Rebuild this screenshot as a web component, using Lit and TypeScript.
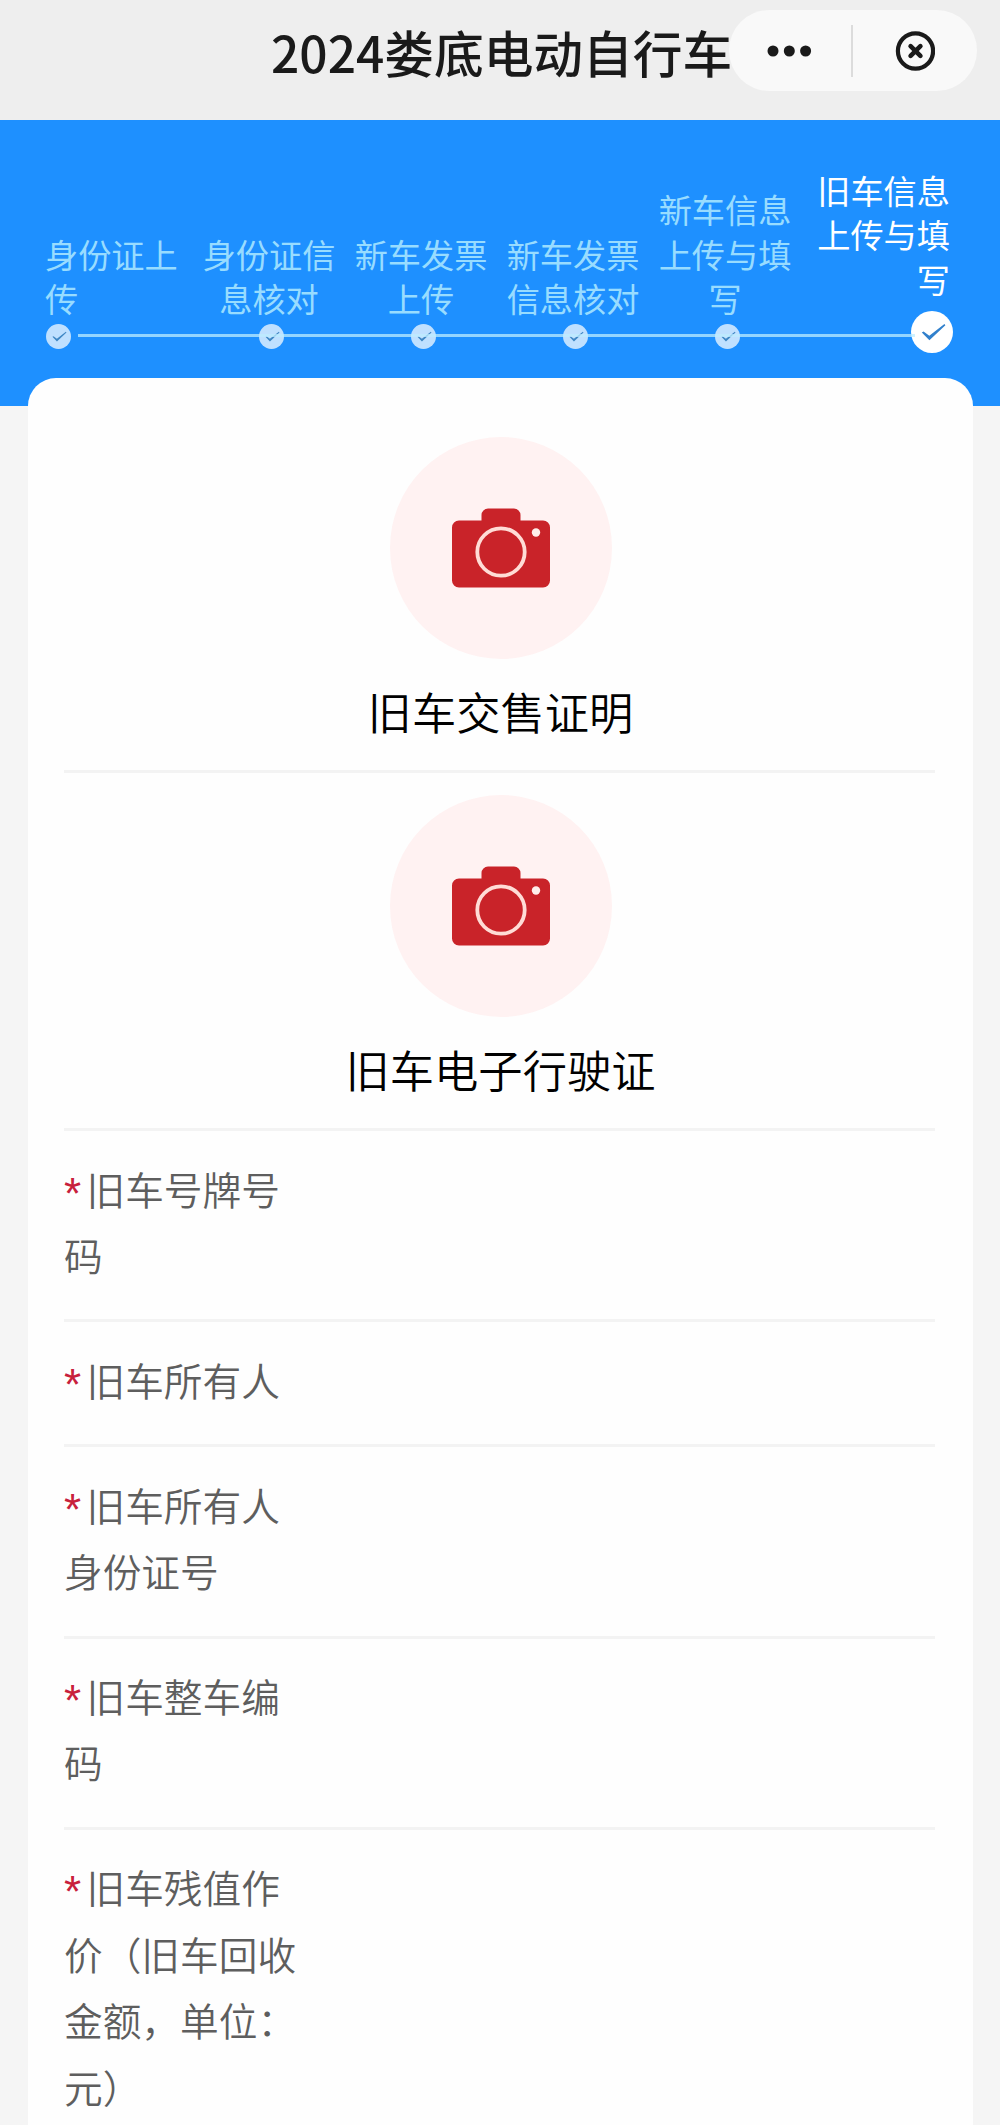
import { LitElement, html, css } from "lit";
import { customElement, property } from "lit/decorators.js";
import { classMap } from "lit/directives/class-map.js";

interface Step {
  lines: string[];
  active?: boolean;
}

const STEPS: Step[] = [
  { lines: ["身份证上", "传"] },
  { lines: ["身份证信", "息核对"] },
  { lines: ["新车发票", "上传"] },
  { lines: ["新车发票", "信息核对"] },
  { lines: ["新车信息", "上传与填", "写"] },
  { lines: ["旧车信息", "上传与填", "写"], active: true },
];

const UPLOADS = ["旧车交售证明", "旧车电子行驶证"];

const FIELDS: string[][] = [
  ["旧车号牌号", "码"],
  ["旧车所有人"],
  ["旧车所有人", "身份证号"],
  ["旧车整车编", "码"],
  ["旧车残值作", "价（旧车回收", "金额，单位：", "元）"],
];

const stack = (lines: string[]) =>
  lines.map((line, i) => (i ? html`<br />${line}` : line));

@customElement("nav-header")
class NavHeader extends LitElement {
  static styles = css`
    :host {
      display: flex;
      align-items: flex-start;
      height: 120px;
      box-sizing: border-box;
      padding-left: 271px;
      background: #eeeeee;
    }
    .title {
      width: 458px;
      flex: none;
      margin: 0;
      padding-top: 13px;
      font-size: 49.7px;
      line-height: 76px;
      font-weight: 500;
      color: #1a1a1a;
      white-space: nowrap;
    }
    .capsule {
      display: flex;
      align-items: center;
      flex: none;
      width: 248px;
      height: 81px;
      margin-top: 10px;
      border-radius: 41px;
      background: #f9f9f9;
    }
    .half {
      flex: 1;
      display: flex;
      justify-content: center;
    }
    .bar {
      width: 2px;
      height: 52px;
      margin-left: -2px;
      background: #dcdcdc;
    }
    svg {
      display: block;
    }
  `;
  render() {
    return html`
      <h1 class="title">2024娄底电动自行车</h1>
      <div class="capsule">
        <div class="half">
          <svg width="48" height="14" viewBox="0 0 48 14" fill="#1a1a1a">
            <circle cx="6" cy="7" r="5.5" />
            <circle cx="22.3" cy="7" r="5.5" />
            <circle cx="38.6" cy="7" r="5.5" />
          </svg>
        </div>
        <div class="bar"></div>
        <div class="half">
          <svg width="40" height="40" viewBox="0 0 40 40" fill="none" stroke="#1a1a1a">
            <circle cx="20.5" cy="20" r="17.6" stroke-width="4.2" />
            <path d="M15.6 15.1 25.4 24.9M25.4 15.1 15.6 24.9" stroke-width="4.6" stroke-linecap="round" />
          </svg>
        </div>
      </div>
    `;
  }
}

@customElement("step-progress")
class StepProgress extends LitElement {
  static styles = css`
    :host {
      display: block;
      height: 286px;
      position: relative;
      box-sizing: border-box;
      padding: 0 50px 0 44px;
      background: #1e90ff;
    }
    .steps {
      display: grid;
      grid-template-columns: 149px repeat(4, 152px) 1fr;
      height: 237px;
    }
    .step {
      display: flex;
      flex-direction: column;
      justify-content: flex-end;
      align-items: center;
      text-align: center;
      color: #98dcff;
      font-size: 33.2px;
      line-height: 44.5px;
    }
    .label {
      white-space: nowrap;
    }
    .dot {
      width: 25px;
      height: 25px;
      margin: 3.5px 0 8px 5px;
      border-radius: 50%;
      background: #bfe0ff;
      flex: none;
    }
    .step:first-child {
      align-items: flex-start;
      text-align: left;
    }
    .step:first-child .label {
      margin-left: 1px;
    }
    .step:first-child .dot {
      margin-left: 2px;
    }
    .active {
      align-items: flex-end;
      text-align: right;
      color: #ffffff;
    }
    .active .dot {
      width: 42px;
      height: 42px;
      margin: 10px -3px 4px 0;
      background: #ffffff;
    }
    .line {
      position: absolute;
      left: 78px;
      right: 85px;
      top: 214px;
      height: 3px;
      background: rgba(190, 236, 255, 0.75);
    }
    svg {
      display: block;
      width: 100%;
      height: 100%;
    }
  `;
  render() {
    return html`
      <div class="steps">
        ${STEPS.map(
          (s) => html`
            <div class=${classMap({ step: true, active: !!s.active })}>
              <div class="label">${stack(s.lines)}</div>
              <div class="dot">
                <svg viewBox="0 0 42 42">
                  <path
                    d="M10.8 21.6 12.6 20.4 18.3 24.7 33.4 12.9 34.4 14.3 18.4 29.2Z"
                    fill=${s.active ? "#3180cc" : "#3f87c4"}
                  />
                </svg>
              </div>
            </div>
          `
        )}
      </div>
      <div class="line"></div>
    `;
  }
}

@customElement("upload-tile")
class UploadTile extends LitElement {
  @property() label = "";
  static styles = css`
    :host {
      display: flex;
      flex-direction: column;
      align-items: center;
      height: 358px;
      box-sizing: border-box;
      padding-top: 22px;
      border-bottom: 3px solid #f3f3f3;
    }
    .disc {
      display: flex;
      justify-content: center;
      width: 222px;
      height: 222px;
      flex: none;
      box-sizing: border-box;
      padding-top: 71px;
      margin-left: 2px;
      border-radius: 50%;
      background: #fff2f2;
    }
    .name {
      margin-top: 19px;
      margin-left: 2px;
      font-size: 44.3px;
      line-height: 66px;
      font-weight: 350;
      color: #000000;
      white-space: nowrap;
    }
  `;
  render() {
    return html`
      <div class="disc">
        <svg width="98" height="80" viewBox="0 0 98 80">
          <path
            d="M7 12.5H29.5V7a6.5 6.5 0 0 1 6.5-6.5H62a6.5 6.5 0 0 1 6.5 6.5V12.5H91a7 7 0 0 1 7 7V72.5a7 7 0 0 1-7 7H7a7 7 0 0 1-7-7V19.5a7 7 0 0 1 7-7Z"
            fill="#c92329"
          />
          <circle cx="49" cy="44" r="23.7" fill="none" stroke="#ffdcd6" stroke-width="3.8" />
          <circle cx="84" cy="24.5" r="4.2" fill="#ffeeea" />
        </svg>
      </div>
      <div class="name">${this.label}</div>
    `;
  }
}

@customElement("form-field")
class FormField extends LitElement {
  @property({ attribute: false }) lines: string[] = [];
  static styles = css`
    :host {
      display: block;
      padding: 23.5px 0 32px;
      border-bottom: 3px solid #f3f3f3;
    }
    .label {
      font-size: 38.7px;
      line-height: 66.4px;
      font-weight: 350;
      color: #5e5e5e;
      white-space: nowrap;
    }
    .mark {
      display: inline-block;
      width: 22.5px;
      height: 40px;
      line-height: 66px;
      vertical-align: top;
      margin-top: 6px;
      font-family: "Liberation Sans", sans-serif;
      font-size: 44px;
      font-weight: 400;
      color: #c8203c;
    }
  `;
  render() {
    return html`<div class="label"><span class="mark">*</span>${stack(this.lines)}</div>`;
  }
}

@customElement("app-root")
class AppRoot extends LitElement {
  static styles = css`
    :host {
      display: block;
      height: 2125px;
      overflow: hidden;
      background: #f5f5f5;
      font-family: "Noto Sans CJK SC", "Noto Sans", sans-serif;
    }
    .card {
      position: relative;
      box-sizing: border-box;
      height: 1760px;
      margin: -28px 27px 0 28px;
      padding: 37px 38px 0 36px;
      border-radius: 28px 28px 0 0;
      background: #fefefe;
    }
  `;
  render() {
    return html`
      <nav-header></nav-header>
      <step-progress></step-progress>
      <div class="card">
        ${UPLOADS.map((u) => html`<upload-tile .label=${u}></upload-tile>`)}
        ${FIELDS.map((f) => html`<form-field .lines=${f}></form-field>`)}
      </div>
    `;
  }
}
